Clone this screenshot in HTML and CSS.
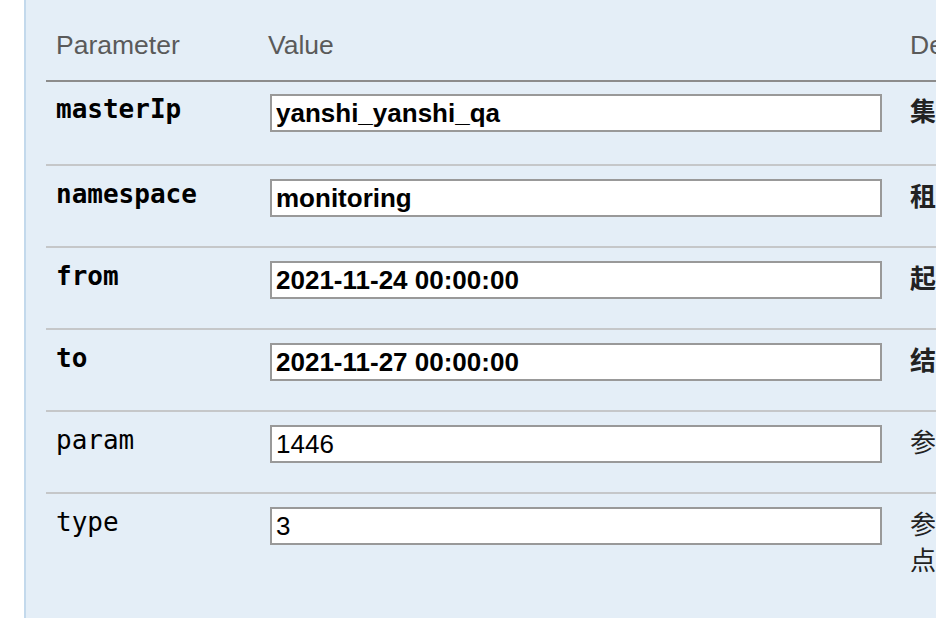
FILE: index.html
```html
<!DOCTYPE html>
<html lang="zh-CN">
<head>
<meta charset="utf-8">
<title>Parameters</title>
<link rel="stylesheet" href="styles.css">
</head>
<body>
<div class="panel">
  <table class="params">
    <colgroup>
      <col class="c-name">
      <col class="c-value">
      <col class="c-desc">
    </colgroup>
    <thead>
      <tr>
        <th>Parameter</th>
        <th>Value</th>
        <th>Description</th>
      </tr>
    </thead>
    <tbody>
      <tr class="required">
        <td class="name">masterIp</td>
        <td class="value"><input class="field" type="text" value="yanshi_yanshi_qa"></td>
        <td class="desc">集群地址</td>
      </tr>
      <tr class="required">
        <td class="name">namespace</td>
        <td class="value"><input class="field" type="text" value="monitoring"></td>
        <td class="desc">租户命名空间</td>
      </tr>
      <tr class="required">
        <td class="name">from</td>
        <td class="value"><input class="field" type="text" value="2021-11-24 00:00:00"></td>
        <td class="desc">起始时间</td>
      </tr>
      <tr class="required">
        <td class="name">to</td>
        <td class="value"><input class="field" type="text" value="2021-11-27 00:00:00"></td>
        <td class="desc">结束时间</td>
      </tr>
      <tr>
        <td class="name">param</td>
        <td class="value"><input class="field" type="text" value="1446"></td>
        <td class="desc">参数编号</td>
      </tr>
      <tr class="last">
        <td class="name">type</td>
        <td class="value"><input class="field" type="text" value="3"></td>
        <td class="desc">参数类型，监控节点维度统计</td>
      </tr>
    </tbody>
  </table>
</div>
</body>
</html>
```
FILE: styles.css
```css
html, body {
  margin: 0;
  padding: 0;
  background: #ffffff;
  overflow: hidden;
  height: 618px;
}

body {
  font-family: "Liberation Sans", "Noto Sans CJK SC", sans-serif;
  font-size: 26px;
  color: #000;
}

.panel {
  margin-left: 24px;
  width: 1200px;
  height: 700px;
  background: #e4eef7;
  border-left: 2px solid #c3d9ec;
  padding-left: 20px;
  box-sizing: border-box;
}

.params {
  border-collapse: separate;
  border-spacing: 0;
  table-layout: fixed;
  width: 1082px;
}

.c-name { width: 214px; }
.c-value { width: 640px; }
.c-desc { width: 228px; }

.params th {
  text-align: left;
  font-weight: normal;
  color: #5a5a5a;
  font-size: 26.5px;
  line-height: 30px;
  padding: 30px 8px 20px 10px;
  border-bottom: 2px solid #8c8c8c;
  white-space: nowrap;
}

.params th:nth-child(2) {
  padding-left: 8px;
}

.params td {
  vertical-align: top;
  padding: 13px 8px 29px 8px;
  border-bottom: 2px solid #c5c7c9;
}

.params tbody tr:first-child td {
  padding-top: 12px;
  padding-bottom: 32px;
}

.params tbody tr.last td {
  border-bottom: none;
  padding-bottom: 60px;
}

.params td.name {
  padding-left: 10px;
  font-family: "DejaVu Sans Mono", monospace;
  font-size: 26px;
  line-height: 30px;
  color: #000;
}

.params td.value {
  padding-right: 18px;
}

.field {
  display: block;
  box-sizing: border-box;
  width: 612px;
  height: 38px;
  margin: 0 0 0 2px;
  padding: 0 4px;
  border: 2px solid #999999;
  background: #ffffff;
  font-family: "Liberation Sans", sans-serif;
  font-size: 26px;
  color: #000;
  outline: none;
}

.params td.desc {
  font-family: "Liberation Sans", "Noto Sans CJK SC", sans-serif;
  font-size: 26px;
  line-height: 36px;
  color: #222;
  padding-left: 10px;
}

.required .name,
.required .field,
.required .desc {
  font-weight: bold;
}
```
